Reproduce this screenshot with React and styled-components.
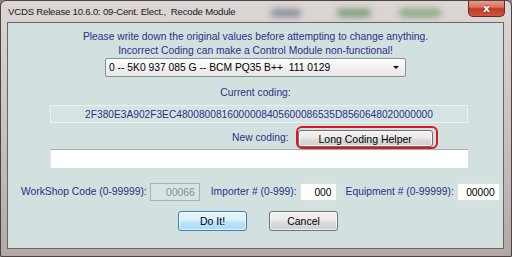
import styled, { createGlobalStyle } from "styled-components";

const Global = createGlobalStyle`
  html, body { margin: 0; padding: 0; }
  body {
    width: 512px;
    height: 257px;
    overflow: hidden;
    background: #8a8080;
    font-family: "Liberation Sans", Arial, sans-serif;
  }
`;

// 창 전체 프레임
const Window = styled.div`
  width: 512px;
  height: 257px;
  box-sizing: border-box;
  border: 1px solid #4d4444;
  border-radius: 6px 6px 2px 2px;
  background: linear-gradient(180deg, #dcd6d5 0%, #cec6c5 40%, #b3a8a8 100%);
  display: flex;
  flex-direction: column;
  overflow: hidden;
`;

const TitleBar = styled.div`
  height: 21px;
  display: flex;
  align-items: flex-start;
  padding-left: 7px;
  flex-shrink: 0;
`;

const Title = styled.span`
  font-size: 9.6px;
  letter-spacing: -0.2px;
  line-height: 22px;
  color: #1a1a1a;
  white-space: nowrap;
`;

// 유리 효과로 비치는 뒷배경
const Blur = styled.span`
  display: block;
  width: ${(p) => p.$w}px;
  height: 8px;
  margin-top: 8px;
  margin-left: ${(p) => p.$gap}px;
  border-radius: 4px;
  background: ${(p) => p.$color};
  filter: blur(3px);
  opacity: 0.75;
`;

const CloseButton = styled.div`
  margin-left: auto;
  margin-right: 6px;
  margin-top: -1px;
  width: 37px;
  height: 17px;
  box-sizing: border-box;
  border: 1px solid #6a2a22;
  border-top: none;
  border-radius: 0 0 5px 5px;
  background: linear-gradient(180deg, #e9a595 0%, #d9705c 45%, #c13a24 55%, #d0553c 100%);
  display: flex;
  align-items: center;
  justify-content: center;
  color: #fff;
  font-family: "DejaVu Sans", sans-serif;
  font-weight: bold;
  font-size: 11px;
  text-shadow: 0 0 2px #5a1a10;
`;

const Client = styled.div`
  flex: 1;
  margin: 0 7px 7px 6px;
  border: 1px solid #6c6262;
  background: #d3e0e0;
  display: flex;
  flex-direction: column;
  align-items: center;
  padding-top: 7px;
  color: #2d2f86;
  font-size: 10.3px;
`;

const Warning = styled.div`
  text-align: center;
  line-height: 14px;
`;

const SelectBox = styled.div`
  width: 301px;
  height: 19px;
  box-sizing: border-box;
  border: 1px solid #8a9090;
  border-radius: 2px;
  background: linear-gradient(180deg, #ffffff 0%, #f2f2f2 50%, #e6e6e6 100%);
  display: flex;
  align-items: center;
  padding: 0 6px 0 3px;
  color: #000;
  font-size: 10.3px;
`;

const SelectText = styled.span`
  flex: 1;
  white-space: pre;
`;

const Arrow = styled.span`
  width: 0;
  height: 0;
  border-left: 3px solid transparent;
  border-right: 3px solid transparent;
  border-top: 3px solid #111;
`;

const Label = styled.span`
  white-space: nowrap;
  line-height: 14px;
`;

const CurrentLabel = styled(Label)`
  margin-top: 9px;
`;

const CodingField = styled.div`
  margin-top: 5px;
  margin-left: 7px;
  width: 418px;
  height: 18px;
  box-sizing: border-box;
  border: 1px solid #e9f1f1;
  background: #d6e3e3;
  display: flex;
  align-items: center;
  justify-content: center;
  font-size: 10.2px;
`;

const NewRow = styled.div`
  align-self: flex-start;
  margin-top: 3px;
  display: flex;
  align-items: center;
  gap: 7px;
  padding-left: 224px;
`;

const Highlight = styled.div`
  padding: 2px 3px 0 0;
  border: 2px solid #e01420;
  border-radius: 6px;
  display: flex;
`;

const Button = styled.button`
  width: ${(p) => p.$w}px;
  height: ${(p) => p.$h}px;
  box-sizing: border-box;
  padding: 0;
  border: 1px solid ${(p) => (p.$focus ? "#3c7fb1" : "#707070")};
  border-radius: 3px;
  background: ${(p) =>
    p.$focus
      ? "linear-gradient(180deg, #eaf6fd 0%, #d9f0fc 45%, #bee6fd 55%, #a7d9f5 100%)"
      : "linear-gradient(180deg, #f2f2f2 0%, #ebebeb 45%, #dddddd 55%, #cfcfcf 100%)"};
  box-shadow: inset 0 0 0 1px rgba(255, 255, 255, 0.7);
  font-family: "Liberation Sans", Arial, sans-serif;
  font-size: 10.5px;
  color: #000;
`;

const CodingInput = styled.div`
  margin-left: 7px;
  width: 418px;
  height: 19px;
  box-sizing: border-box;
  border-top: 1px solid #a4acac;
  border-left: 1px solid #e4eaea;
  background: #fff;
`;

const FieldsRow = styled.div`
  align-self: flex-start;
  margin-top: 15px;
  display: flex;
  align-items: center;
  padding-left: 13px;
`;

const FieldLabel = styled(Label)`
  margin-left: ${(p) => p.$gap}px;
  margin-right: 3px;
`;

const NumberBox = styled.div`
  width: ${(p) => p.$w}px;
  height: 18px;
  box-sizing: border-box;
  border: 1px solid ${(p) => (p.$disabled ? "#a8b0b0" : "#d8e2e2")};
  background: ${(p) => (p.$disabled ? "#d8e4e4" : "#fff")};
  color: ${(p) => (p.$disabled ? "#8a9090" : "#000")};
  display: flex;
  align-items: center;
  justify-content: flex-end;
  padding-right: 4px;
  font-size: 10.3px;
`;

const ButtonRow = styled.div`
  margin-top: 10px;
  display: flex;
  gap: 22px;
  margin-left: 5px;
`;

const blurs = [
  { w: 30, gap: 36, color: "#6f7888" },
  { w: 34, gap: 36, color: "#5f8a58" },
  { w: 42, gap: 28, color: "#6e9866" },
];

export default function App() {
  return (
    <>
      <Global />
      <Window>
        <TitleBar>
          <Title>VCDS Release 10.6.0: 09-Cent. Elect.,&nbsp; Recode Module</Title>
          {blurs.map((b, i) => (
            <Blur key={i} $w={b.w} $gap={b.gap} $color={b.color} />
          ))}
          <CloseButton>x</CloseButton>
        </TitleBar>
        <Client>
          <Warning>
            Please write down the original values before attempting to change anything.
            <br />
            Incorrect Coding can make a Control Module non-functional!
          </Warning>
          <SelectBox>
            <SelectText>0 -- 5K0 937 085 G -- BCM PQ35 B++  111 0129</SelectText>
            <Arrow />
          </SelectBox>
          <CurrentLabel>Current coding:</CurrentLabel>
          <CodingField>2F380E3A902F3EC4800800816000008405600086535D8560648020000000</CodingField>
          <NewRow>
            <Label>New coding:</Label>
            <Highlight>
              <Button $w={135} $h={17}>Long Coding Helper</Button>
            </Highlight>
          </NewRow>
          <CodingInput />
          <FieldsRow>
            <FieldLabel $gap={0}>WorkShop Code (0-99999):</FieldLabel>
            <NumberBox $w={50} $disabled>00066</NumberBox>
            <FieldLabel $gap={11}>Importer # (0-999):</FieldLabel>
            <NumberBox $w={37}>000</NumberBox>
            <FieldLabel $gap={9}>Equipment # (0-99999):</FieldLabel>
            <NumberBox $w={43}>00000</NumberBox>
          </FieldsRow>
          <ButtonRow>
            <Button $w={69} $h={20} $focus>Do It!</Button>
            <Button $w={69} $h={20}>Cancel</Button>
          </ButtonRow>
        </Client>
      </Window>
    </>
  );
}
